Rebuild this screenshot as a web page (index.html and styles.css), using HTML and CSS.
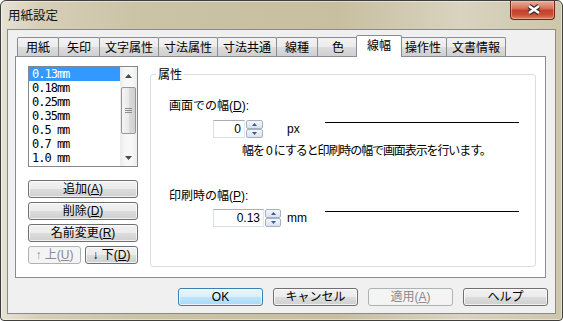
FILE: index.html
```html
<!DOCTYPE html>
<html lang="ja">
<head>
<meta charset="UTF-8">
<title>用紙設定</title>
<link rel="stylesheet" href="styles.css">
</head>
<body>
<div class="window">
    <div class="titlebar">
        <span class="title">用紙設定</span>
        <div class="close">
            <svg width="45" height="19" viewBox="0 0 45 19">
                <path d="M19 6 L29 13 M29 6 L19 13" stroke="#3b2a26" stroke-width="5" fill="none"/>
                <path d="M19 6 L29 13 M29 6 L19 13" stroke="#ffffff" stroke-width="2.6" fill="none"/>
            </svg>
        </div>
    </div>
    <div class="client">
        <div class="tabcontrol">
            <div class="tabs">
                <div class="tab">用紙</div>
                <div class="tab">矢印</div>
                <div class="tab">文字属性</div>
                <div class="tab">寸法属性</div>
                <div class="tab">寸法共通</div>
                <div class="tab">線種</div>
                <div class="tab">色</div>
                <div class="tab active">線幅</div>
                <div class="tab">操作性</div>
                <div class="tab">文書情報</div>
            </div>
            <div class="panel">
                <div class="leftcol">
                    <div class="listbox">
                        <ul class="items">
                            <li class="sel">0.13mm</li>
                            <li>0.18mm</li>
                            <li>0.25mm</li>
                            <li>0.35mm</li>
                            <li>0.5 mm</li>
                            <li>0.7 mm</li>
                            <li>1.0 mm</li>
                        </ul>
                        <div class="vscroll">
                            <div class="arrow">
                                <svg width="7" height="4" viewBox="0 0 7 4"><path d="M0 4 L3.5 0 L7 4 Z" fill="#4a4a4a"/></svg>
                            </div>
                            <div class="thumb">
                                <svg width="7" height="5" viewBox="0 0 7 5"><path d="M0 0.5 H7 M0 2.5 H7 M0 4.5 H7" stroke="#8c8c8c" stroke-width="1"/></svg>
                            </div>
                            <div class="track"></div>
                            <div class="arrow">
                                <svg width="7" height="4" viewBox="0 0 7 4"><path d="M0 0 L7 0 L3.5 4 Z" fill="#4a4a4a"/></svg>
                            </div>
                        </div>
                    </div>
                    <button class="btn first">追加(<u>A</u>)</button>
                    <button class="btn">削除(<u>D</u>)</button>
                    <button class="btn">名前変更(<u>R</u>)</button>
                    <div class="updown">
                        <button class="btn" disabled>↑ 上(<u>U</u>)</button>
                        <button class="btn">↓ 下(<u>D</u>)</button>
                    </div>
                </div>
                <fieldset class="group">
                    <legend>属性</legend>
                    <div class="flabel">画面での幅(<u>D</u>):</div>
                    <div class="spinrow">
                        <div class="spincell">
                            <div class="edit short">0</div>
                            <div class="spinbtns">
                                <div class="sb"><svg width="5" height="3" viewBox="0 0 5 3"><path d="M0 3 L2.5 0 L5 3 Z" fill="#3f5a86"/></svg></div>
                                <div class="sb"><svg width="5" height="3" viewBox="0 0 5 3"><path d="M0 0 L5 0 L2.5 3 Z" fill="#3f5a86"/></svg></div>
                            </div>
                        </div>
                        <div class="unit">px</div>
                        <div class="sample"></div>
                    </div>
                    <div class="note">幅を&nbsp;0&nbsp;にすると印刷時の幅で画面表示を行います。</div>
                    <div class="flabel second">印刷時の幅(<u>P</u>):</div>
                    <div class="spinrow">
                        <div class="spincell">
                            <div class="edit long">0.13</div>
                            <div class="spinbtns">
                                <div class="sb"><svg width="5" height="3" viewBox="0 0 5 3"><path d="M0 3 L2.5 0 L5 3 Z" fill="#3f5a86"/></svg></div>
                                <div class="sb"><svg width="5" height="3" viewBox="0 0 5 3"><path d="M0 0 L5 0 L2.5 3 Z" fill="#3f5a86"/></svg></div>
                            </div>
                        </div>
                        <div class="unit">mm</div>
                        <div class="sample"></div>
                    </div>
                </fieldset>
            </div>
        </div>
        <div class="footer">
            <button class="btn default">OK</button>
            <button class="btn">キャンセル</button>
            <button class="btn" disabled>適用(<u>A</u>)</button>
            <button class="btn">ヘルプ</button>
        </div>
    </div>
</div>
</body>
</html>
```

FILE: styles.css
```css
body {
    margin: 0;
    font-family: "Liberation Sans", "Noto Sans CJK JP", sans-serif;
    font-size: 12px;
    color: #000;
}
.window {
    width: 563px;
    height: 321px;
    box-sizing: border-box;
    border: 1px solid #3f3f3f;
    border-radius: 6px 6px 4px 4px;
    background: linear-gradient(to right, #e6e2d5 0, #d6cfb6 7%, #cbc3a6 25%, #c8bfa0 60%, #d9d3c0 82%, #cec6aa 100%);
    box-shadow: inset 0 0 0 1px rgba(255, 255, 255, 0.45);
    display: flex;
    flex-direction: column;
}
.titlebar {
    height: 28px;
    display: flex;
    justify-content: space-between;
    align-items: flex-start;
}
.title {
    margin: 6px 0 0 7px;
    line-height: 16px;
    font-family: "Noto Sans CJK JP", sans-serif;
    font-size: 12.5px;
    color: #111;
}
.close {
    width: 45px;
    height: 19px;
    margin-right: 7px;
    box-sizing: border-box;
    border: 1px solid #6a2618;
    border-top: none;
    border-radius: 0 0 4px 4px;
    background: linear-gradient(#e9ad9c 0, #d9735b 40%, #c4412b 52%, #c94d33 75%, #dd8465 100%);
    box-shadow: inset 0 0 0 1px rgba(255, 210, 195, 0.45);
}
.close svg {
    display: block;
    margin: -1px 0 0 -1px;
}
.client {
    flex: 1;
    margin: 0 6px 6px;
    border: 1px solid #8a8a8a;
    background: #f0f0f0;
    padding: 5px 7px 7px;
}
.tabcontrol {
    margin-right: 2px;
}
.tabs {
    display: flex;
    height: 21px;
    padding-left: 2px;
    align-items: flex-start;
}
.tab {
    box-sizing: border-box;
    height: 19px;
    margin-top: 2px;
    margin-left: -1px;
    min-width: 42px;
    padding: 0 5px;
    border: 1px solid #898c95;
    border-bottom: none;
    border-radius: 2px 2px 0 0;
    background: linear-gradient(#f3f3f3 0, #ebebeb 50%, #dddddd 50%, #cfcfcf 100%);
    line-height: 18px;
    text-align: center;
    font-family: "Noto Sans CJK JP", sans-serif;
}
.tab:first-child {
    margin-left: 0;
}
.tab.active {
    position: relative;
    z-index: 2;
    height: 22px;
    margin-top: 0;
    margin-left: -3px;
    margin-right: -2px;
    margin-bottom: -1px;
    min-width: 46px;
    padding: 0 7px;
    background: #fff;
}
.panel {
    box-sizing: border-box;
    height: 222px;
    border: 1px solid #898c95;
    background: #fff;
    padding: 9px 9px 10px 12px;
    display: flex;
    gap: 12px;
}
.leftcol {
    width: 110px;
    flex: none;
}
.listbox {
    box-sizing: border-box;
    height: 101px;
    border: 1px solid #828790;
    display: flex;
    background: #fff;
}
.items {
    flex: 1;
    list-style: none;
    margin: 0;
    padding: 0;
    font-family: "DejaVu Sans Mono", monospace;
    font-size: 12px;
    letter-spacing: -1px;
}
.items li {
    height: 14px;
    line-height: 14px;
    padding-left: 3px;
}
.items li.sel {
    background: #3399ff;
    color: #fff;
}
.vscroll {
    width: 17px;
    display: flex;
    flex-direction: column;
    background: linear-gradient(to right, #eaeaea, #f7f7f7 30%, #f7f7f7 70%, #ededed);
}
.arrow {
    height: 17px;
    display: flex;
    align-items: center;
    justify-content: center;
}
.thumb {
    height: 47px;
    margin: 3px 1px 0;
    box-sizing: border-box;
    border: 1px solid #979797;
    border-radius: 2px;
    background: linear-gradient(to right, #f4f4f4 0, #e9e9e9 50%, #dcdcdc 50%, #d0d0d0 100%);
    display: flex;
    align-items: center;
    justify-content: center;
}
.track {
    flex: 1;
}
.btn {
    display: block;
    box-sizing: border-box;
    width: 100%;
    height: 18px;
    margin: 4px 0 0;
    padding: 0;
    border: 1px solid #707070;
    border-radius: 3px;
    background: linear-gradient(#f2f2f2 0, #ebebeb 48%, #dddddd 50%, #cfcfcf 100%);
    box-shadow: inset 0 0 0 1px rgba(255, 255, 255, 0.7);
    font: inherit;
    line-height: 15px;
    color: #000;
}
.btn.first {
    margin-top: 13px;
}
.btn:disabled {
    border-color: #adb2b5;
    background: #f4f4f4;
    box-shadow: none;
    color: #8a8a8a;
}
.btn.default {
    border-color: #3c7fb1;
    background: linear-gradient(#eaf6fd 0, #d9f0fc 48%, #bee6fd 50%, #a7d9f5 100%);
}
.updown {
    display: flex;
    gap: 4px;
}
.updown .btn {
    flex: 1;
}
.group {
    flex: 1;
    margin: 1px 0 0;
    padding: 0;
    min-width: 0;
    border: 1px solid #d5dfe5;
    border-radius: 3px;
}
.group legend {
    margin-left: 5px;
    padding: 0 2px;
    line-height: 14px;
    font-family: "Noto Sans CJK JP", sans-serif;
}
.flabel {
    margin: 18px 0 0 18px;
    line-height: 14px;
}
.flabel.second {
    margin-top: 31px;
}
.spinrow {
    display: flex;
    height: 18px;
    margin: 7px 0 0 62px;
}
.flabel.second + .spinrow {
    margin-top: 6px;
}
.spincell {
    width: 74px;
    display: flex;
    gap: 1px;
}
.edit {
    box-sizing: border-box;
    height: 18px;
    border: 1px solid #dbdfe6;
    border-top-color: #abadb3;
    border-right-color: #e3e9ef;
    background: #fff;
    text-align: right;
    padding-right: 3px;
    line-height: 16px;
}
.edit.short {
    width: 32px;
}
.edit.long {
    width: 51px;
}
.spinbtns {
    width: 17px;
    display: flex;
    flex-direction: column;
}
.edit.long + .spinbtns {
    width: 16px;
}
.sb {
    flex: 1;
    box-sizing: border-box;
    border: 1px solid #a5b1c2;
    border-radius: 2px;
    background: linear-gradient(#f4f7fa, #d9e2ec);
    display: flex;
    align-items: center;
    justify-content: center;
}
.unit {
    width: 38px;
    line-height: 18px;
}
.sample {
    width: 194px;
    height: 1px;
    margin-top: 2px;
    background: #000;
}
.note {
    margin: 6px 0 0 91px;
    line-height: 14px;
    letter-spacing: -1.1px;
}
.footer {
    display: flex;
    justify-content: flex-end;
    gap: 10px;
    margin-top: 10px;
}
.footer .btn {
    width: 85px;
    margin: 0;
}
```
